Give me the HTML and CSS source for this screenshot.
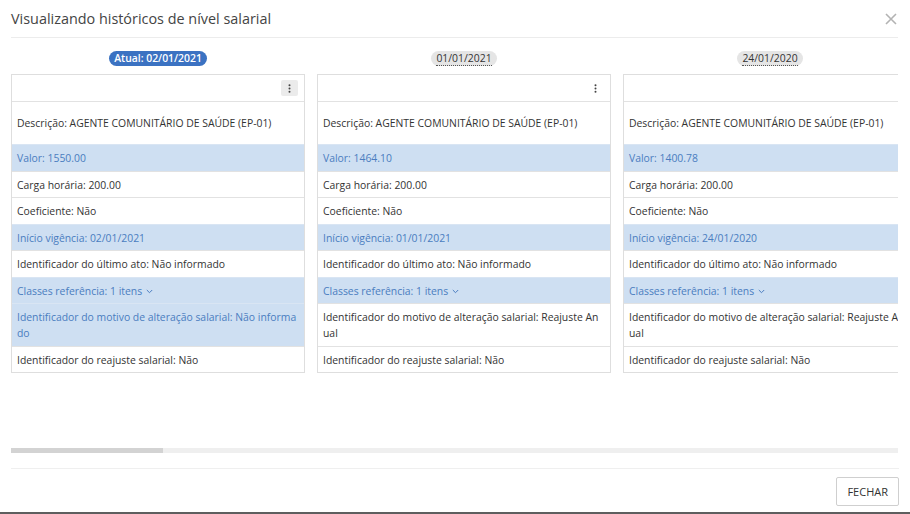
FILE: index.html
```html
<!DOCTYPE html>
<html lang="pt-BR">
<head>
  <meta charset="UTF-8" />
  <meta name="viewport" content="width=device-width, initial-scale=1.0"/>
  <title>Históricos de nível salarial</title>
  <link rel="stylesheet" href="styles.css">
</head>
<body>
  <div class="modal">
    <div class="modal-header">
      <h4>Visualizando históricos de nível salarial</h4>
      <button class="close" aria-label="Fechar">
        <svg width="12" height="12" viewBox="0 0 12 12"><path d="M1 1L11 11M11 1L1 11" stroke="#b3b3b3" stroke-width="1.6" fill="none"/></svg>
      </button>
    </div>

    <div class="modal-body">
      <div class="history-scroll" id="historyScroll">
        <div class="history-list" id="historyList"></div>
      </div>
      <div class="scrollbar"><div class="scroll-thumb" id="scrollThumb"></div></div>
    </div>

    <div class="modal-footer">
      <button class="btn-close">FECHAR</button>
    </div>
  </div>

  <script>
    const historicos = [
      { data: "02/01/2021", valor: "1550.00", motivo: "Não informado", atual: true },
      { data: "01/01/2021", valor: "1464.10", motivo: "Reajuste Anual" },
      { data: "24/01/2020", valor: "1400.78", motivo: "Reajuste Anual" },
      { data: "01/01/2020", valor: "1350.00", motivo: "Reajuste Anual" },
      { data: "01/01/2019", valor: "1300.00", motivo: "Reajuste Anual" },
      { data: "01/01/2018", valor: "1250.00", motivo: "Reajuste Anual" },
      { data: "01/01/2017", valor: "1200.00", motivo: "Reajuste Anual" },
      { data: "01/01/2016", valor: "1150.00", motivo: "Reajuste Anual" },
      { data: "01/01/2015", valor: "1100.00", motivo: "Reajuste Anual" },
      { data: "01/01/2014", valor: "1050.00", motivo: "Reajuste Anual" },
      { data: "01/01/2013", valor: "1000.00", motivo: "Reajuste Anual" },
      { data: "01/01/2012", valor: "950.00", motivo: "Reajuste Anual" },
      { data: "01/01/2011", valor: "900.00", motivo: "Reajuste Anual" },
      { data: "01/01/2010", valor: "850.00", motivo: "Reajuste Anual" },
      { data: "01/01/2009", valor: "800.00", motivo: "Reajuste Anual" },
      { data: "01/01/2008", valor: "750.00", motivo: "Reajuste Anual" },
      { data: "01/01/2007", valor: "700.00", motivo: "Reajuste Anual" }
    ];

    const chevron = '<svg class="chevron" width="7" height="5" viewBox="0 0 7 5"><path d="M0.8 1L3.5 3.7L6.2 1" stroke="currentColor" stroke-width="1" fill="none"/></svg>';
    const kebab = '<svg width="3" height="9" viewBox="0 0 3 9"><circle cx="1.5" cy="1.2" r="1"/><circle cx="1.5" cy="4.5" r="1"/><circle cx="1.5" cy="7.8" r="1"/></svg>';

    function loadHistoricos() {
      const list = document.getElementById("historyList");

      historicos.forEach((h, i) => {
        const col = document.createElement("div");
        col.className = "history-col";

        const badge = h.atual
          ? `<span class="badge badge-current">Atual: ${h.data}</span>`
          : `<span class="badge"><span class="dotted">${h.data}</span></span>`;

        const motivoClass = h.atual ? "row changed" : "row";

        col.innerHTML = `
          ${badge}
          <div class="card">
            <div class="card-header">
              <button class="kebab${i === 0 ? " active" : ""}">${kebab}</button>
            </div>
            <div class="row desc">Descrição: AGENTE COMUNITÁRIO DE SAÚDE (EP-01)</div>
            <div class="row changed">Valor: ${h.valor}</div>
            <div class="row">Carga horária: 200.00</div>
            <div class="row">Coeficiente: Não</div>
            <div class="row changed">Início vigência: ${h.data}</div>
            <div class="row">Identificador do último ato: Não informado</div>
            <div class="row changed">Classes referência: 1 itens ${chevron}</div>
            <div class="${motivoClass}">Identificador do motivo de alteração salarial: ${h.motivo}</div>
            <div class="row">Identificador do reajuste salarial: Não</div>
          </div>
        `;

        list.appendChild(col);
      });

      // the scroll area hides the native bar, so size our own thumb
      const scroll = document.getElementById("historyScroll");
      const ratio = scroll.clientWidth / scroll.scrollWidth;
      document.getElementById("scrollThumb").style.width = (ratio * 100).toFixed(2) + "%";
    }

    loadHistoricos();
  </script>
</body>
</html>
```

FILE: styles.css
```css
* {
  box-sizing: border-box;
}
body {
  margin: 0;
  background: #fff;
  color: #333;
  font-family: "Open Sans", "Noto Sans", sans-serif;
  font-size: 10.4px;
}
.modal {
  width: 910px;
  height: 514px;
  border-bottom: 2px solid #5e5e5e;
  display: flex;
  flex-direction: column;
}
.modal-header {
  margin: 0 12px 0 11px;
  height: 38px;
  border-bottom: 1px solid #ececec;
  display: flex;
  align-items: center;
  justify-content: space-between;
}
.modal-header h4 {
  margin: 0;
  font-size: 14.4px;
  font-weight: normal;
  color: #444;
  line-height: 21px;
  padding-bottom: 1px;
}
.close {
  background: none;
  border: none;
  padding: 0;
  margin-right: 1px;
  display: flex;
  cursor: pointer;
}
.modal-body {
  padding: 0 12px 0 11px;
}
.history-scroll {
  height: 410px;
  overflow: hidden;
}
.scrollbar {
  height: 5px;
  background: #efefef;
}
.scroll-thumb {
  height: 100%;
  background: #d3d3d3;
}
.history-list {
  display: flex;
  gap: 12px;
  padding-top: 13px;
}
.history-col {
  flex: 0 0 294px;
  display: flex;
  flex-direction: column;
  align-items: center;
}
.badge {
  height: 15px;
  line-height: 15px;
  padding: 0 5px;
  border-radius: 8px;
  background: #e5e5e5;
  color: #333;
  font-size: 10.4px;
}
.badge .dotted {
  border-bottom: 1px dotted #555;
}
.badge-current {
  background: #3b72c2;
  color: #fff;
  font-weight: 600;
}
.card {
  width: 100%;
  margin-top: 8px;
  border: 1px solid #dedede;
}
.card-header {
  height: 26px;
  display: flex;
  align-items: center;
  justify-content: flex-end;
  padding-right: 6px;
}
.kebab {
  width: 17px;
  height: 16px;
  border: none;
  border-radius: 2px;
  background: none;
  display: flex;
  align-items: center;
  justify-content: center;
  padding: 0;
  fill: #444;
}
.kebab.active {
  background: #ebebeb;
}
.row {
  border-top: 1px solid #e2e2e2;
  padding: 5px 6px 4.5px 5px;
  line-height: 16px;
  word-break: break-all;
}
.row.desc {
  padding: 13px 6px 13px 5px;
}
.row.changed {
  background: #cedff2;
  color: #4a7dc0;
  border-top-color: #d9e5f3;
}
.chevron {
  vertical-align: middle;
  margin-left: 1px;
}
.modal-footer {
  margin: 15px 11px 0 11px;
  border-top: 1px solid #efefef;
  display: flex;
  justify-content: flex-end;
  padding-top: 8px;
}
.btn-close {
  height: 29px;
  padding: 0 10px;
  background: #fff;
  border: 1px solid #cfcfcf;
  border-radius: 2px;
  color: #333;
  font-family: "Open Sans", "Noto Sans", sans-serif;
  font-size: 11px;
  cursor: pointer;
}
```
